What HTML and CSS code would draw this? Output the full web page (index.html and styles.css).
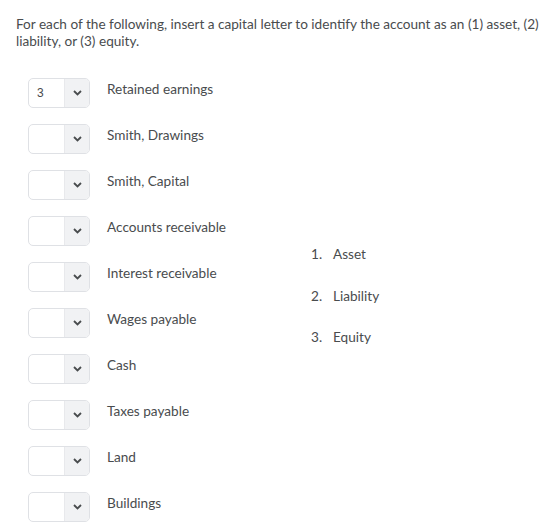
FILE: index.html
```html
<!DOCTYPE html>
<html lang="en">
<head>
    <meta charset="UTF-8">
    <title>Matching question</title>
    <link rel="stylesheet" href="styles.css">
</head>
<body>
    <p class="prompt">For each of the following, insert a capital letter to identify the account as an (1) asset, (2) liability, or (3) equity.</p>

    <div class="match">
        <div class="rows">
            <div class="row">
                <div class="pick"><span class="value">3</span><span class="arrow"><svg width="9" height="6" viewBox="0 0 9 6"><path d="M1 1l3.5 3.5L8 1" fill="none" stroke="#494c4e" stroke-width="1.8"/></svg></span></div>
                <span class="label">Retained earnings</span>
            </div>
            <div class="row">
                <div class="pick"><span class="value"></span><span class="arrow"><svg width="9" height="6" viewBox="0 0 9 6"><path d="M1 1l3.5 3.5L8 1" fill="none" stroke="#494c4e" stroke-width="1.8"/></svg></span></div>
                <span class="label">Smith, Drawings</span>
            </div>
            <div class="row">
                <div class="pick"><span class="value"></span><span class="arrow"><svg width="9" height="6" viewBox="0 0 9 6"><path d="M1 1l3.5 3.5L8 1" fill="none" stroke="#494c4e" stroke-width="1.8"/></svg></span></div>
                <span class="label">Smith, Capital</span>
            </div>
            <div class="row">
                <div class="pick"><span class="value"></span><span class="arrow"><svg width="9" height="6" viewBox="0 0 9 6"><path d="M1 1l3.5 3.5L8 1" fill="none" stroke="#494c4e" stroke-width="1.8"/></svg></span></div>
                <span class="label">Accounts receivable</span>
            </div>
            <div class="row">
                <div class="pick"><span class="value"></span><span class="arrow"><svg width="9" height="6" viewBox="0 0 9 6"><path d="M1 1l3.5 3.5L8 1" fill="none" stroke="#494c4e" stroke-width="1.8"/></svg></span></div>
                <span class="label">Interest receivable</span>
            </div>
            <div class="row">
                <div class="pick"><span class="value"></span><span class="arrow"><svg width="9" height="6" viewBox="0 0 9 6"><path d="M1 1l3.5 3.5L8 1" fill="none" stroke="#494c4e" stroke-width="1.8"/></svg></span></div>
                <span class="label">Wages payable</span>
            </div>
            <div class="row">
                <div class="pick"><span class="value"></span><span class="arrow"><svg width="9" height="6" viewBox="0 0 9 6"><path d="M1 1l3.5 3.5L8 1" fill="none" stroke="#494c4e" stroke-width="1.8"/></svg></span></div>
                <span class="label">Cash</span>
            </div>
            <div class="row">
                <div class="pick"><span class="value"></span><span class="arrow"><svg width="9" height="6" viewBox="0 0 9 6"><path d="M1 1l3.5 3.5L8 1" fill="none" stroke="#494c4e" stroke-width="1.8"/></svg></span></div>
                <span class="label">Taxes payable</span>
            </div>
            <div class="row">
                <div class="pick"><span class="value"></span><span class="arrow"><svg width="9" height="6" viewBox="0 0 9 6"><path d="M1 1l3.5 3.5L8 1" fill="none" stroke="#494c4e" stroke-width="1.8"/></svg></span></div>
                <span class="label">Land</span>
            </div>
            <div class="row">
                <div class="pick"><span class="value"></span><span class="arrow"><svg width="9" height="6" viewBox="0 0 9 6"><path d="M1 1l3.5 3.5L8 1" fill="none" stroke="#494c4e" stroke-width="1.8"/></svg></span></div>
                <span class="label">Buildings</span>
            </div>
        </div>

        <ol class="choices">
            <li><span class="num">1.</span>Asset</li>
            <li><span class="num">2.</span>Liability</li>
            <li><span class="num">3.</span>Equity</li>
        </ol>
    </div>
</body>
</html>
```

FILE: styles.css
```css
* {
    margin: 0;
    padding: 0;
    box-sizing: border-box;
}

body {
    background: #ffffff;
    color: #494c4e;
    font-family: 'Lato', 'Open Sans', sans-serif;
    font-size: 13.6px;
    padding: 16px 10px 15px 16px;
}

.prompt {
    line-height: 17px;
    margin-bottom: 28px;
}

.match {
    display: flex;
    align-items: center;
}

.rows {
    width: 295px;
    padding-left: 12px;
    display: flex;
    flex-direction: column;
    gap: 16px;
}

.row {
    display: flex;
    align-items: center;
    gap: 17px;
}

.pick {
    display: flex;
    width: 62px;
    height: 30px;
    border: 1px solid #dfe1e5;
    border-radius: 5px;
    overflow: hidden;
    background: #ffffff;
}

.value {
    width: 35px;
    line-height: 28px;
    padding-left: 8px;
    color: #494c4e;
    font-family: 'Liberation Sans', sans-serif;
    font-size: 12px;
}

.arrow {
    flex: 1;
    background: #f1f2f4;
    border-left: 1px solid #e8e9ec;
    display: flex;
    align-items: center;
    justify-content: center;
}

.label {
    line-height: 17px;
    margin-top: -8px;
}

.choices {
    list-style: none;
    display: flex;
    flex-direction: column;
    gap: 24.5px;
    margin-top: -8px;
}

.choices li {
    display: flex;
    line-height: 17px;
}

.num {
    width: 22px;
}
```
